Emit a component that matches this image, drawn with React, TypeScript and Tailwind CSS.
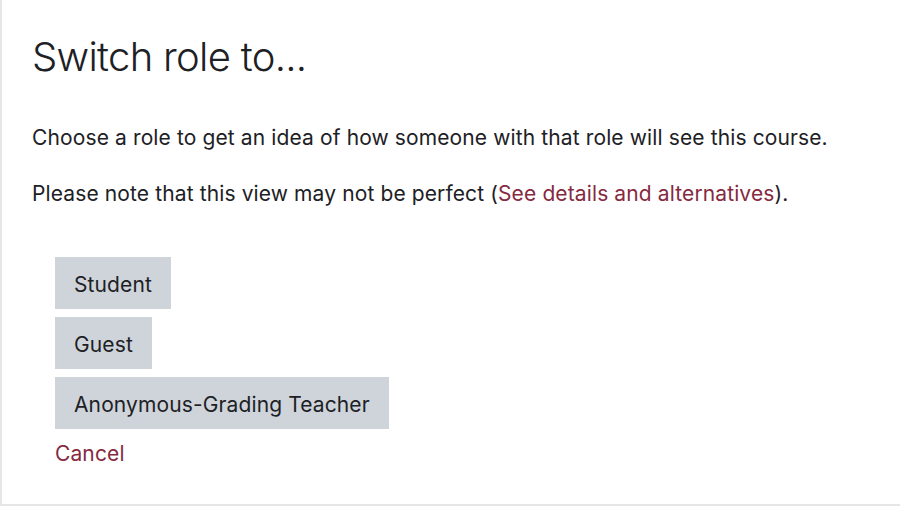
export default function App() {
  return (
    <div className="w-[900px] h-[507px] bg-white" style={{ fontFamily: 'Inter, "Liberation Sans", Arial, sans-serif' }}>
      <div className="h-[506px] border-l-2 border-b-2 border-[#e6e6e6] pl-[30px] pt-[33px] text-[#1d2125]">
        <h2 className="text-[40px] leading-[48px] font-light tracking-[-0.7px] text-[#1d2125]">Switch role to...</h2>
        <p className="text-[21px] leading-[30px] tracking-[0.12px] mt-[42px]">
          Choose a role to get an idea of how someone with that role will see this course.
        </p>
        <p className="text-[21px] leading-[30px] tracking-[0.12px] mt-[26px]">
          Please note that this view may not be perfect (
          <a className="text-[#862a3f]">See details and alternatives</a>).
        </p>
        <div className="flex flex-col items-start gap-[8px] mt-[48px] pl-[23px]">
          <button className="bg-[#ced4da] h-[52px] pt-[3px] px-[19px] text-[21px] tracking-[0.12px]">Student</button>
          <button className="bg-[#ced4da] h-[52px] pt-[3px] px-[19px] text-[21px] tracking-[0.12px]">Guest</button>
          <button className="bg-[#ced4da] h-[52px] pt-[3px] px-[19px] text-[21px] tracking-[0.12px]">Anonymous-Grading Teacher</button>
          <a className="text-[21px] leading-[30px] tracking-[0.12px] text-[#862a3f] mt-[2px]">Cancel</a>
        </div>
      </div>
    </div>
  );
}
